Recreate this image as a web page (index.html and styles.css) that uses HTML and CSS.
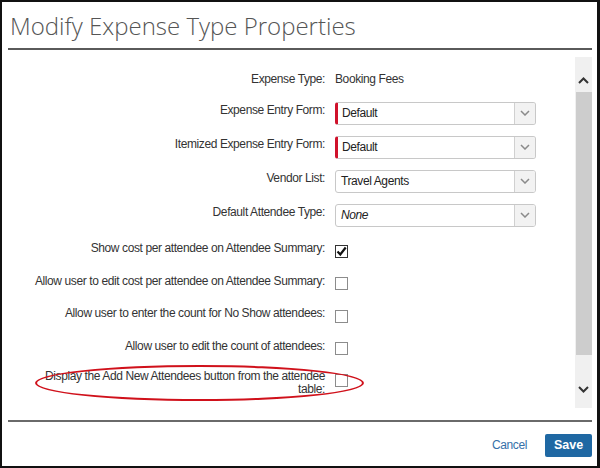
FILE: index.html
```html
<!DOCTYPE html>
<html>
<head>
<meta charset="utf-8">
<link rel="stylesheet" href="styles.css">
</head>
<body>
<div class="dialog">
  <header class="hd"><h1 class="title">Modify Expense Type Properties</h1></header>
  <div class="body">
    <div class="form">
      <div class="row sel-row">
        <div class="label plain">Expense Type:</div>
        <div class="value">Booking Fees</div>
      </div>
      <div class="row sel-row">
        <div class="label">Expense Entry Form:</div>
        <div class="select required"><span class="sv">Default</span><span class="chev"><svg width="10" height="6" viewBox="0 0 10 6"><path d="M1 1l4 4 4-4" fill="none" stroke="#8a8a8a" stroke-width="1.5"/></svg></span></div>
      </div>
      <div class="row sel-row">
        <div class="label">Itemized Expense Entry Form:</div>
        <div class="select required"><span class="sv">Default</span><span class="chev"><svg width="10" height="6" viewBox="0 0 10 6"><path d="M1 1l4 4 4-4" fill="none" stroke="#8a8a8a" stroke-width="1.5"/></svg></span></div>
      </div>
      <div class="row sel-row">
        <div class="label">Vendor List:</div>
        <div class="select"><span class="sv">Travel Agents</span><span class="chev"><svg width="10" height="6" viewBox="0 0 10 6"><path d="M1 1l4 4 4-4" fill="none" stroke="#8a8a8a" stroke-width="1.5"/></svg></span></div>
      </div>
      <div class="row sel-row">
        <div class="label">Default Attendee Type:</div>
        <div class="select"><span class="sv italic">None</span><span class="chev"><svg width="10" height="6" viewBox="0 0 10 6"><path d="M1 1l4 4 4-4" fill="none" stroke="#8a8a8a" stroke-width="1.5"/></svg></span></div>
      </div>
      <div class="row cb-row first-cb">
        <div class="label">Show cost per attendee on Attendee Summary:</div>
        <div class="cb checked"><svg width="11" height="11" viewBox="0 0 11 11"><path d="M1.5 5.5l2.8 3 5.4-7" fill="none" stroke="#111" stroke-width="2.2"/></svg></div>
      </div>
      <div class="row cb-row">
        <div class="label">Allow user to edit cost per attendee on Attendee Summary:</div>
        <div class="cb"></div>
      </div>
      <div class="row cb-row">
        <div class="label">Allow user to enter the count for No Show attendees:</div>
        <div class="cb"></div>
      </div>
      <div class="row cb-row">
        <div class="label">Allow user to edit the count of attendees:</div>
        <div class="cb"></div>
      </div>
      <div class="row last-row">
        <div class="label two">Display the Add New Attendees button from the attendee table:</div>
        <div class="cb"></div>
        <div class="annot"></div>
      </div>
    </div>
    <div class="scrollbar">
      <div class="sb-up"><svg width="11" height="7" viewBox="0 0 11 7"><path d="M1 6l4.5-4.5L10 6" fill="none" stroke="#333" stroke-width="2"/></svg></div>
      <div class="thumb"></div>
      <div class="sb-down"><svg width="11" height="7" viewBox="0 0 11 7"><path d="M1 1l4.5 4.5L10 1" fill="none" stroke="#333" stroke-width="2"/></svg></div>
    </div>
  </div>
  <footer class="ft">
    <span class="cancel">Cancel</span>
    <span class="save">Save</span>
  </footer>
</div>
</body>
</html>
```
FILE: styles.css
```css
* { box-sizing: border-box; }
html, body { margin: 0; padding: 0; background: #fff; }
.dialog {
  width: 600px;
  height: 468px;
  border: 2px solid #111;
  border-right-width: 3px;
  display: flex;
  flex-direction: column;
  font-family: "Liberation Sans", Arial, sans-serif;
  color: #333;
  overflow: hidden;
}
.hd {
  margin: 0 5px 0 6px;
  padding: 8px 0 6px 2px;
  border-bottom: 2px solid #5a5a5a;
}
.title {
  margin: 0;
  font-family: "Open Sans", sans-serif;
  font-weight: 300;
  font-size: 24px;
  line-height: 32px;
  color: #555;
}
.body {
  flex: 1;
  display: flex;
  padding: 7px 5px 12px 0;
  min-height: 0;
}
.form {
  flex: 1;
  padding-top: 5px;
  font-size: 12px;
  letter-spacing: -0.4px;
}
.row {
  display: grid;
  grid-template-columns: 323px 201px;
  column-gap: 10px;
  align-items: center;
}
.sel-row { height: 34px; }
.cb-row { height: 32.5px; }
.first-cb { margin-top: 3px; }
.label {
  text-align: right;
  line-height: 14px;
  padding-bottom: 6px;
  padding-left: 22px;
}
.label.plain { padding-bottom: 0; }
.value { line-height: 14px; }
.select {
  height: 23px;
  border: 1px solid #c8c8c8;
  border-radius: 3px;
  display: flex;
  align-items: center;
  background: #fff;
}
.select.required { border-left: 3px solid #d0112b; }
.sv { flex: 1; padding-left: 5px; color: #222; }
.required .sv { padding-left: 4px; }
.sv.italic { font-style: italic; }
.chev {
  width: 21px;
  height: 100%;
  border-left: 1px solid #d0d0d0;
  background: #f2f2f2;
  border-radius: 0 2px 2px 0;
  display: flex;
  align-items: center;
  justify-content: center;
}
.cb {
  width: 13px;
  height: 13px;
  border: 1px solid #8c8c8c;
  background: #fff;
  display: flex;
  align-items: center;
  justify-content: center;
}
.cb.checked { border-color: #333; }
.last-row {
  align-items: start;
  padding-top: 5px;
  position: relative;
}
.last-row .label { padding-bottom: 0; padding-top: 0; line-height: 13px; }
.last-row .cb { margin-top: 4px; }
.annot {
  position: absolute;
  left: 33px;
  top: 0;
  width: 329px;
  height: 36px;
  border: 2px solid #d0111b;
  border-radius: 50%;
}
.scrollbar {
  width: 17px;
  background: #f0f0f0;
  display: flex;
  flex-direction: column;
}
.sb-up {
  height: 35px;
  display: flex;
  justify-content: center;
  padding-top: 20px;
}
.thumb {
  flex: 1;
  margin-left: 1px;
  background: #cdcdcd;
}
.sb-down {
  height: 53px;
  display: flex;
  justify-content: center;
  padding-top: 31px;
}
.ft {
  height: 46px;
  margin: 0 5px 0 6px;
  border-top: 2px solid #6a6a6a;
  display: flex;
  justify-content: flex-end;
  align-items: flex-start;
  padding-top: 12px;
  gap: 18px;
}
.cancel {
  font-size: 12px;
  letter-spacing: -0.4px;
  color: #3570a8;
  line-height: 23px;
}
.save {
  width: 47px;
  height: 23px;
  background: #1f68a3;
  color: #fff;
  font-weight: bold;
  font-size: 12.5px;
  line-height: 23px;
  text-align: center;
  border-radius: 2px;
}
```
